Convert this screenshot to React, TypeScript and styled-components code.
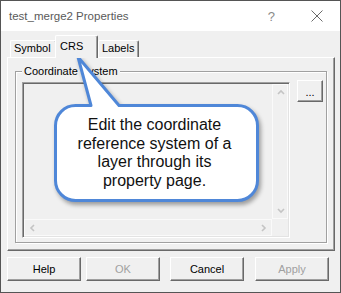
import React from "react";
import styled, { createGlobalStyle } from "styled-components";

const uiFont = `"Liberation Sans", Arial, sans-serif`;

const GlobalStyle = createGlobalStyle`
  html, body { margin: 0; padding: 0; background: #fff; }
  body { font-family: "Liberation Sans", Arial, sans-serif; }
  * { box-sizing: border-box; }
`;

const Window = styled.div`
  position: relative;
  width: 341px;
  height: 293px;
  border: 1px solid #555;
  background: #f0f0f0;
  display: flex;
  flex-direction: column;
  font-family: ${uiFont};
  font-size: 11px;
  color: #000;
  overflow: hidden;
`;

const TitleBar = styled.div`
  height: 30px;
  flex: none;
  background: #fff;
  display: flex;
  align-items: center;
  padding: 0 17px 0 8px;
`;

const TitleText = styled.div`
  flex: 1;
  font-size: 11.5px;
  color: #5a5a5a;
  white-space: nowrap;
`;

const HelpMark = styled.div`
  font-size: 13px;
  color: #8a8a8a;
`;

const CloseIcon = styled.svg`
  margin-left: 36px;
  display: block;
`;

const Body = styled.div`
  flex: 1;
  display: flex;
  flex-direction: column;
  padding: 4px 5px 0 6px;
`;

const TabStrip = styled.div`
  display: flex;
  align-items: flex-end;
  height: 22px;
  padding-left: 3px;
`;

const Tab = styled.div<{ $active?: boolean; $w: number }>`
  position: relative;
  width: ${(p) => p.$w}px;
  height: ${(p) => (p.$active ? 23 : 17)}px;
  margin: ${(p) => (p.$active ? "0 0 -1px -2px" : "0")};
  z-index: ${(p) => (p.$active ? 1 : 0)};
  background: #f0f0f0;
  border-top: 1px solid #fff;
  border-left: 1px solid #fff;
  border-right: 1px solid #696969;
  box-shadow: inset -1px 0 0 #a0a0a0;
  border-radius: 2px 2px 0 0;
  padding: ${(p) => (p.$active ? "3px 0 0 4px" : "0 0 0 3px")};
  line-height: 14px;
  white-space: nowrap;
`;

const Panel = styled.div`
  height: 194px;
  border-top: 1px solid #fff;
  border-left: 1px solid #fff;
  border-right: 1px solid #696969;
  border-bottom: 1px solid #696969;
  box-shadow: inset -1px -1px 0 #a0a0a0;
  padding: 6px 7px 7px 7px;
  display: flex;
`;

const GroupFrame = styled.div`
  position: relative;
  flex: 1;
  margin-top: 7px;
  border: 1px solid #a0a0a0;
  box-shadow: inset 1px 1px 0 #fff, 1px 1px 0 #fff;
  padding: 10px 3px 4px 6px;
  display: flex;
  align-items: flex-start;
`;

const Legend = styled.div`
  position: absolute;
  top: -8px;
  left: 6px;
  padding: 0 2px;
  background: #f0f0f0;
  line-height: 14px;
`;

const ListBox = styled.div`
  flex: 1;
  height: 156px;
  border: 1px solid;
  border-color: #a0a0a0 #fff #fff #a0a0a0;
  box-shadow: inset 1px 1px 0 #696969, inset -1px -1px 0 #e3e3e3;
  padding: 1px;
  display: grid;
  grid-template-columns: 1fr 16px;
  grid-template-rows: 1fr 17px;
`;

const ScrollTrack = styled.div<{ $horizontal?: boolean }>`
  display: flex;
  flex-direction: ${(p) => (p.$horizontal ? "row" : "column")};
  justify-content: space-between;
  border: 1px solid #fafafa;
  background: #f0f0f0;
`;

const ScrollButton = styled.div`
  width: 15px;
  height: 15px;
  display: flex;
  align-items: center;
  justify-content: center;
`;

const Corner = styled.div`
  background: #f0f0f0;
`;

const RaisedButton = styled.div<{ $disabled?: boolean }>`
  display: flex;
  align-items: center;
  justify-content: center;
  background: #f0f0f0;
  border: 1px solid;
  border-color: #fff #696969 #696969 #fff;
  box-shadow: inset -1px -1px 0 #a0a0a0;
  color: ${(p) => (p.$disabled ? "#a0a0a0" : "#000")};
  white-space: nowrap;
`;

const BrowseButton = styled(RaisedButton)`
  width: 26px;
  height: 22px;
  margin: -2px 0 0 7px;
  padding-top: 2px;
`;

const ButtonRow = styled.div`
  display: flex;
  margin-top: 6px;
`;

const DialogButton = styled(RaisedButton)<{ $gap: number }>`
  width: 74px;
  height: 24px;
  margin-left: ${(p) => p.$gap}px;
`;

const Callout = styled.div`
  position: absolute;
  left: 48px;
  top: 52px;
  width: 214px;
  height: 154px;
  pointer-events: none;
`;

const CalloutShape = styled.svg`
  position: absolute;
  left: 0;
  top: 0;
  filter: drop-shadow(2px 3px 2px rgba(0, 0, 0, 0.35));
`;

const CalloutText = styled.div`
  position: relative;
  padding: 63px 3px 0 0;
  text-align: center;
  font-size: 16px;
  line-height: 18.5px;
  color: #111;
`;

const Chevron = ({ dir }: { dir: "up" | "down" | "left" | "right" }) => {
  const paths = {
    up: "M1 5 L4 2 L7 5",
    down: "M1 2 L4 5 L7 2",
    left: "M5 1 L2 4 L5 7",
    right: "M2 1 L5 4 L2 7",
  };
  const vertical = dir === "up" || dir === "down";
  return (
    <svg width={vertical ? 8 : 7} height={vertical ? 7 : 8} viewBox={vertical ? "0 0 8 7" : "0 0 7 8"}>
      <path d={paths[dir]} fill="none" stroke="#c4c4c4" strokeWidth="1.6" />
    </svg>
  );
};

const calloutPath =
  "M42 52.5 L29 4 L70 52.5 H188.5 A20 20 0 0 1 208.5 72.5 V127.5 A20 20 0 0 1 188.5 147.5 H26.5 A20 20 0 0 1 6.5 127.5 V72.5 A20 20 0 0 1 26.5 52.5 Z";

export default function App() {
  return (
    <>
      <GlobalStyle />
      <Window>
        <TitleBar>
          <TitleText>test_merge2 Properties</TitleText>
          <HelpMark>?</HelpMark>
          <CloseIcon width="12" height="12" viewBox="0 0 12 12">
            <path d="M0.5 0.5 L11.5 11.5 M11.5 0.5 L0.5 11.5" stroke="#6a6a6a" strokeWidth="1" />
          </CloseIcon>
        </TitleBar>
        <Body>
          <TabStrip>
            <Tab $w={47}>Symbol</Tab>
            <Tab $w={43} $active>
              CRS
            </Tab>
            <Tab $w={41}>Labels</Tab>
          </TabStrip>
          <Panel>
            <GroupFrame>
              <Legend>Coordinate System</Legend>
              <ListBox>
                <div />
                <ScrollTrack>
                  <ScrollButton>
                    <Chevron dir="up" />
                  </ScrollButton>
                  <ScrollButton>
                    <Chevron dir="down" />
                  </ScrollButton>
                </ScrollTrack>
                <ScrollTrack $horizontal>
                  <ScrollButton>
                    <Chevron dir="left" />
                  </ScrollButton>
                  <ScrollButton>
                    <Chevron dir="right" />
                  </ScrollButton>
                </ScrollTrack>
                <Corner />
              </ListBox>
              <BrowseButton>...</BrowseButton>
            </GroupFrame>
          </Panel>
          <ButtonRow>
            <DialogButton $gap={0}>Help</DialogButton>
            <DialogButton $gap={5} $disabled>
              OK
            </DialogButton>
            <DialogButton $gap={10}>Cancel</DialogButton>
            <DialogButton $gap={11} $disabled>
              Apply
            </DialogButton>
          </ButtonRow>
        </Body>
        <Callout>
          <CalloutShape width="214" height="154" viewBox="0 0 214 154">
            <path d={calloutPath} fill="#fff" stroke="#4f87d8" strokeWidth="3" strokeLinejoin="round" />
          </CalloutShape>
          <CalloutText>
            Edit the coordinate
            <br />
            reference system of a
            <br />
            layer through its
            <br />
            property page.
          </CalloutText>
        </Callout>
      </Window>
    </>
  );
}
